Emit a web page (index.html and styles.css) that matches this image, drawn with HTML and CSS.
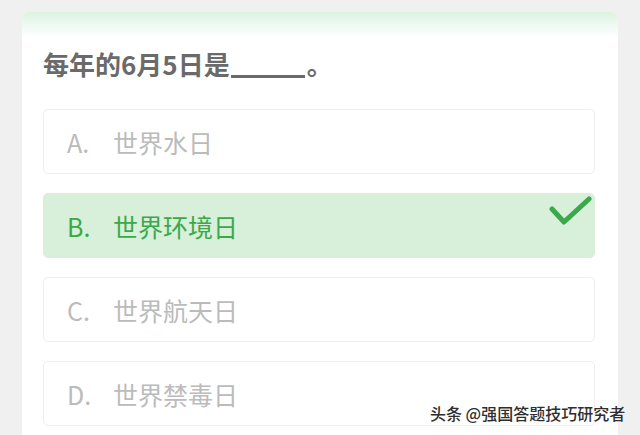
FILE: index.html
```html
<!DOCTYPE html>
<html lang="zh-CN">
<head>
  <meta charset="UTF-8">
  <title>答题</title>
  <meta name="viewport" content="width=device-width, initial-scale=1.0">
  <link rel="stylesheet" href="styles.css">
</head>
<body>

  <!-- Question card -->
  <div class="card">
    <div class="question">每年的6月5日是<span class="blank"></span>。</div>

    <div class="options">
      <div class="option">
        <span class="letter">A.</span>
        <span class="answer">世界水日</span>
      </div>
      <div class="option correct">
        <span class="letter">B.</span>
        <span class="answer">世界环境日</span>
        <svg class="tick" width="44" height="32" viewBox="0 0 44 32">
          <polyline points="3,13 15,26 40,3" fill="none" stroke="#3aa94a" stroke-width="5" stroke-linecap="round" stroke-linejoin="round"/>
        </svg>
      </div>
      <div class="option">
        <span class="letter">C.</span>
        <span class="answer">世界航天日</span>
      </div>
      <div class="option">
        <span class="letter">D.</span>
        <span class="answer">世界禁毒日</span>
      </div>
    </div>
  </div>

  <!-- Watermark -->
  <div class="watermark">头条 @强国答题技巧研究者</div>

</body>
</html>
```

FILE: styles.css
```css
/* Reset */
* {
  margin: 0;
  padding: 0;
  box-sizing: border-box;
}

body {
  background: #f0f0f0;
  font-family: "Noto Sans CJK SC", "Noto Sans", sans-serif;
  padding-top: 12px;
  height: 435px;
  overflow: hidden;
  position: relative;
}

/* Card with the green header glow */
.card {
  margin-left: 22px;
  width: 596px;
  min-height: 440px;
  background: linear-gradient(#dcf2df 0, #eef9f0 12px, #ffffff 26px);
  border-radius: 8px 8px 0 0;
  padding: 37px 23px 0 21px;
}

.question {
  font-size: 26px;
  line-height: 30px;
  font-weight: 700;
  color: #6a6a6a;
}

/* the fill-in line */
.blank {
  display: inline-block;
  width: 74px;
  height: 3px;
  background: #6a6a6a;
  margin: 0 2px 0 1px;
  vertical-align: -3px;
}

.options {
  margin-top: 30px;
  display: flex;
  flex-direction: column;
  gap: 19px;
}

.option {
  position: relative;   /* so the tick can sit on top */
  height: 65px;
  display: flex;
  align-items: center;
  padding-left: 23px;
  border: 1px solid #eeeeee;
  border-radius: 5px;
  background: #fff;
  font-size: 25px;
  color: #bbbbbb;
}

.letter {
  width: 46px;
}

.option.correct {
  background: #d8efda;
  border-color: #d8efda;
  color: #3aa94a;
}

.tick {
  position: absolute;
  right: 1px;
  top: 2px;
}

.watermark {
  position: absolute;
  left: 430px;
  top: 401px;
  font-size: 16px;
  line-height: 24px;
  color: #2e2e2e;
  font-weight: 500;
  text-shadow: 0 0 2px #fff;
}
```
